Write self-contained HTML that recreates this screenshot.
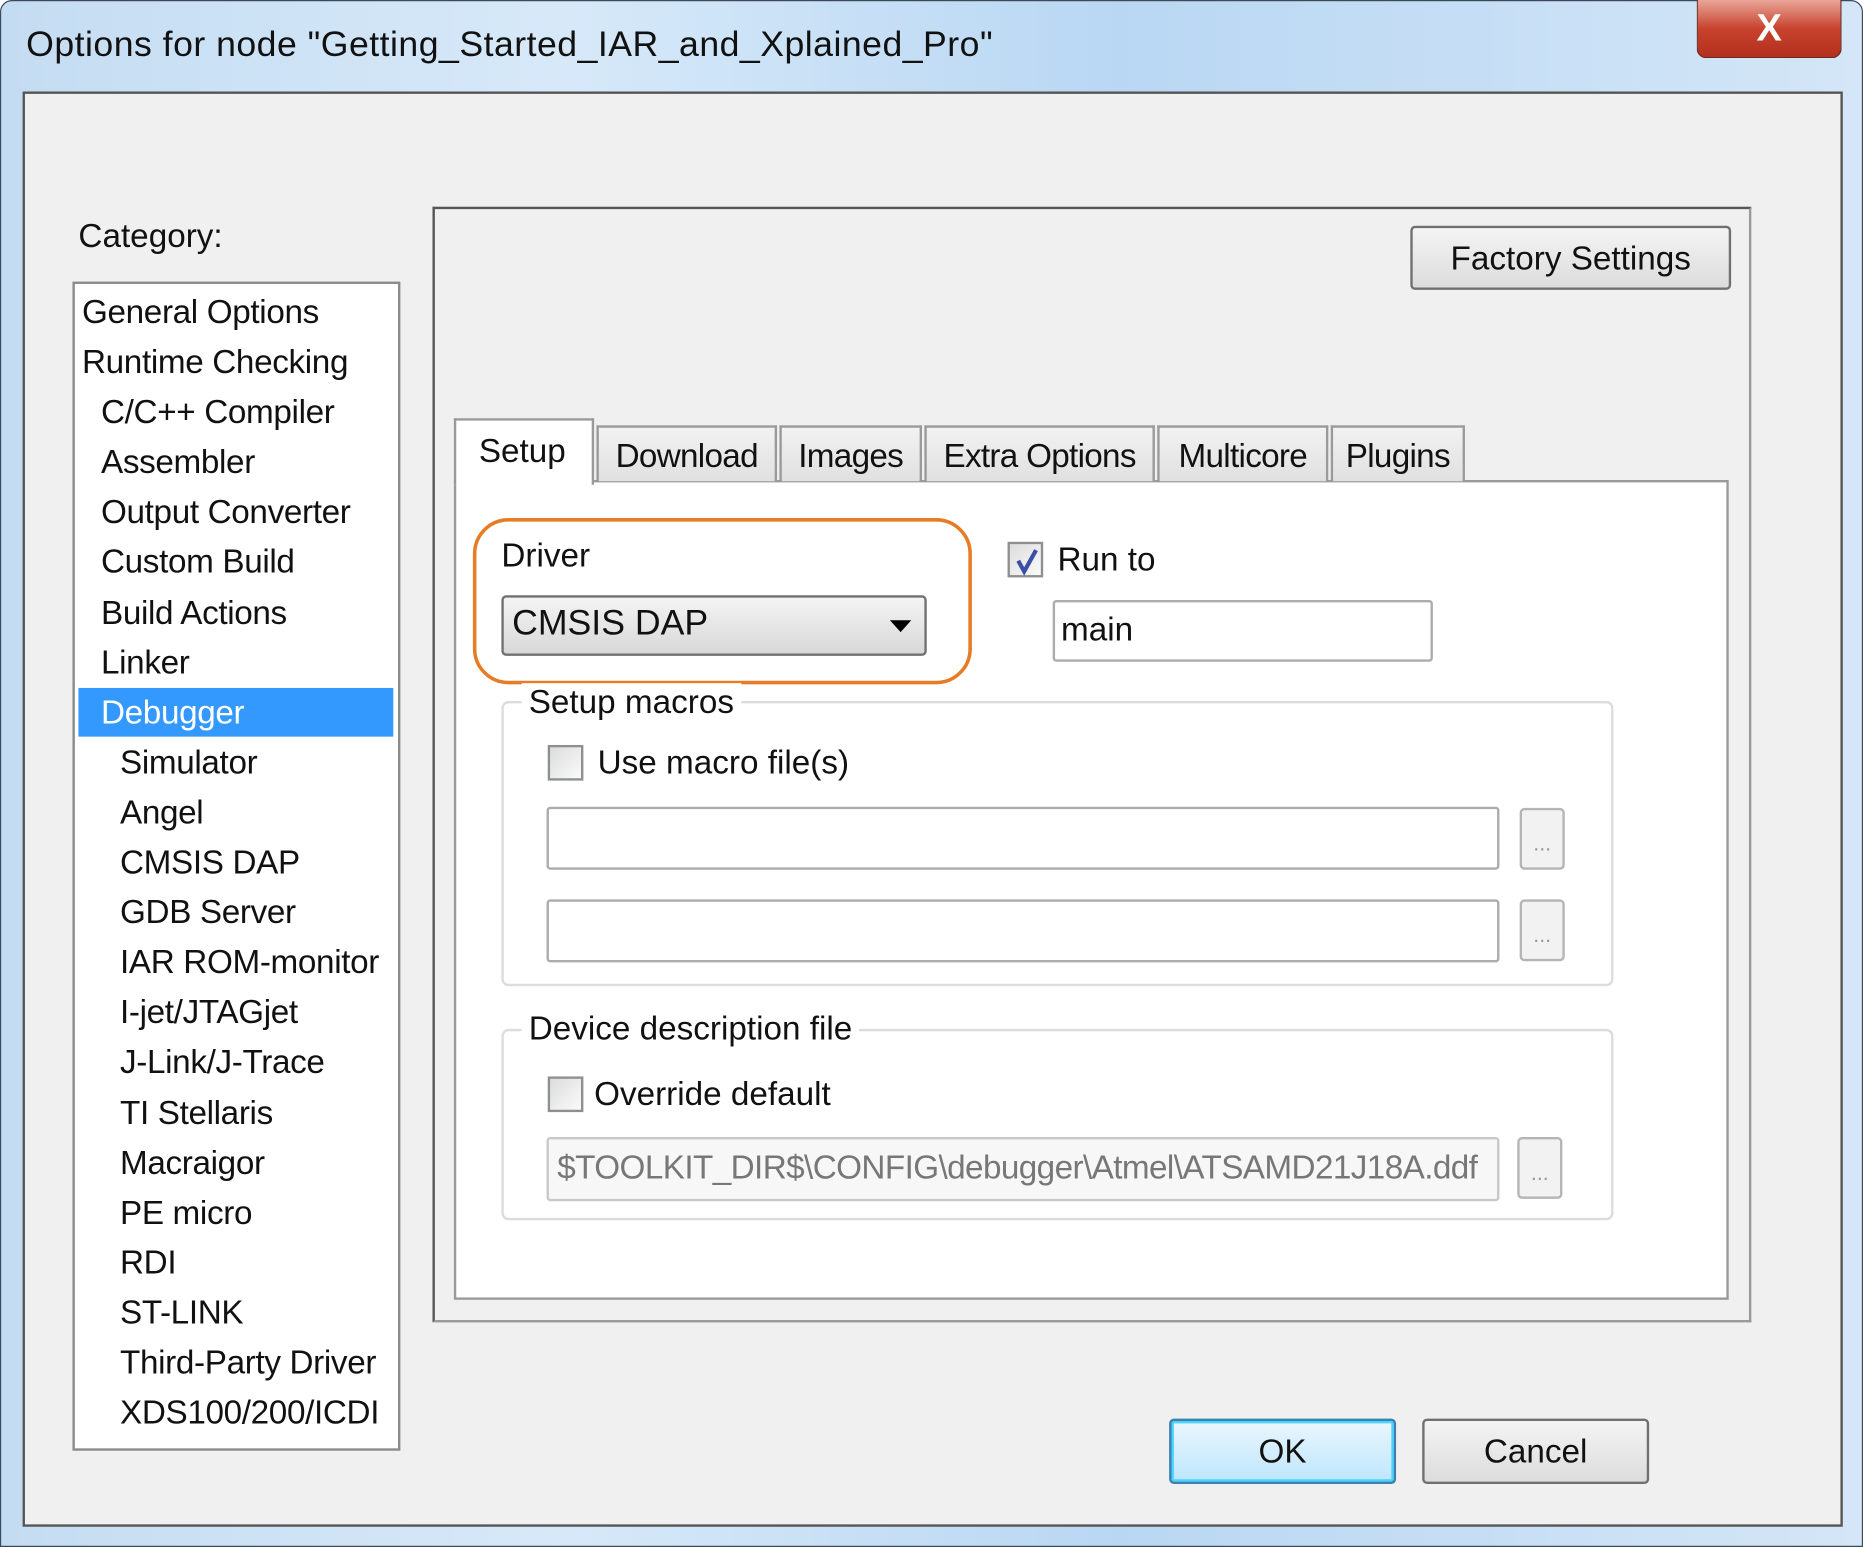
<!DOCTYPE html>
<html><head><meta charset="utf-8"><style>
html,body{margin:0;padding:0;width:1863px;height:1547px;overflow:hidden;background:#fff}
#s{position:absolute;left:0;top:0;width:1568px;height:1302px;transform:scale(1.18814);transform-origin:0 0;font-family:"Liberation Sans",sans-serif;color:#111;font-size:28px;letter-spacing:0}
.a{position:absolute}
.win{left:0;top:0;width:1566px;height:1300px;border:1px solid #3a4a5a;border-radius:10px 10px 0 0;background:linear-gradient(90deg,#c4dcf2 0%,#d7e9f9 30%,#b9d7f3 60%,#d4e6f7 100%)}
.t{white-space:nowrap}
.box{background:#fff;border:2px solid #8a8a8a}
.btn{border:2px solid #707070;border-radius:4px;background:linear-gradient(#f4f4f4,#dcdcdc);text-align:center;box-sizing:border-box}
.inp{background:#fff;border:2px solid #acacac;border-radius:3px;box-sizing:border-box}
.cb{width:30px;height:30px;border:2px solid #8e8f8f;background:linear-gradient(135deg,#dcdcdc,#fafafa);box-sizing:border-box}
.dots{width:38px;height:52px;border:2px solid #b5b5b5;border-radius:4px;background:#f2f2f2;box-sizing:border-box;color:#999;font-size:18px;text-align:center;line-height:56px}
.tab{top:358px;height:47px;border:2px solid #9a9a9a;border-bottom:none;background:linear-gradient(#f2f2f2,#e0e0e0);box-sizing:border-box;text-align:center;line-height:48px;letter-spacing:-0.6px}
.grp{border:2px solid #dcdcdc;border-radius:6px}
.lg{background:#fff;padding:0 6px}
.l div{height:42.1px}
.l .i1{padding-left:16px}
.l .i2{padding-left:32px}
</style></head><body><div id="s">
<div class="a win"></div>
<div class="a t" style="left:22px;top:21px;font-size:30px;letter-spacing:0.4px">Options for node "Getting_Started_IAR_and_Xplained_Pro"</div>
<div class="a" style="left:1428px;top:0;width:120px;height:48px;border:1px solid #6b2a20;border-top:none;border-radius:0 0 8px 8px;background:linear-gradient(#e9a597,#c8432e 50%,#b3301d);color:#fff;font-size:32px;font-weight:bold;text-align:center;line-height:46px">X</div>
<div class="a" style="left:19px;top:77px;width:1528px;height:1204px;background:#f0f0f0;border:2px solid #555"></div>
<div class="a t" style="left:66px;top:183px">Category:</div>
<div class="a box" style="left:61px;top:237px;width:272px;height:980px"></div>
<div class="a" style="left:66px;top:579px;width:265px;height:41px;background:#3399ff"></div>
<div class="a t l" style="left:69px;top:246px;line-height:34px;letter-spacing:-0.3px">
<div>General Options</div><div>Runtime Checking</div><div class="i1">C/C++ Compiler</div><div class="i1">Assembler</div><div class="i1">Output Converter</div><div class="i1">Custom Build</div><div class="i1">Build Actions</div><div class="i1">Linker</div><div class="i1" style="color:#fff">Debugger</div><div class="i2">Simulator</div><div class="i2">Angel</div><div class="i2">CMSIS DAP</div><div class="i2">GDB Server</div><div class="i2">IAR ROM-monitor</div><div class="i2">I-jet/JTAGjet</div><div class="i2">J-Link/J-Trace</div><div class="i2">TI Stellaris</div><div class="i2">Macraigor</div><div class="i2">PE micro</div><div class="i2">RDI</div><div class="i2">ST-LINK</div><div class="i2">Third-Party Driver</div><div class="i2">XDS100/200/ICDI</div></div>
<div class="a" style="left:364px;top:174px;width:1106px;height:935px;border:2px solid #555;border-right-color:#999;border-bottom-color:#999"></div>
<div class="a btn t" style="left:1187px;top:190px;width:270px;height:54px;line-height:52px">Factory Settings</div>
<div class="a box" style="left:382px;top:404px;width:1069px;height:686px;border-color:#9a9a9a"></div>
<div class="a tab" style="left:502px;width:152px">Download</div>
<div class="a tab" style="left:656px;width:120px">Images</div>
<div class="a tab" style="left:778px;width:194px">Extra Options</div>
<div class="a tab" style="left:974px;width:144px">Multicore</div>
<div class="a tab" style="left:1120px;width:113px">Plugins</div>
<div class="a" style="left:382px;top:352px;width:118px;height:56px;background:#fff;border:2px solid #9a9a9a;border-bottom:none;box-sizing:border-box;line-height:52px;padding-left:19px">Setup</div>
<div class="a" style="left:398px;top:436px;width:414px;height:134px;border:3px solid #e77c26;border-radius:30px"></div>
<div class="a t" style="left:422px;top:452px">Driver</div>
<div class="a" style="left:422px;top:501px;width:358px;height:51px;border:2px solid #707070;border-radius:4px;box-sizing:border-box;background:linear-gradient(#f4f4f4,#d8d8d8)"></div>
<div class="a t" style="left:431px;top:508px;font-size:30px">CMSIS DAP</div>
<div class="a" style="left:749px;top:522px;width:0;height:0;border-left:9px solid transparent;border-right:9px solid transparent;border-top:10px solid #000"></div>
<div class="a cb" style="left:848px;top:456px"></div>
<svg class="a" style="left:848px;top:456px" width="32" height="32"><path d="M9 16 L14 25 L24 7" stroke="#3b4fa8" stroke-width="3.5" fill="none"/></svg>
<div class="a t" style="left:890px;top:455px">Run to</div>
<div class="a inp" style="left:886px;top:505px;width:320px;height:52px"></div>
<div class="a t" style="left:893px;top:514px">main</div>
<div class="a grp" style="left:422px;top:590px;width:932px;height:236px"></div>
<div class="a t lg" style="left:439px;top:575px">Setup macros</div>
<div class="a cb" style="left:461px;top:627px"></div>
<div class="a t" style="left:503px;top:626px">Use macro file(s)</div>
<div class="a inp" style="left:460px;top:679px;width:802px;height:53px"></div>
<div class="a dots" style="left:1279px;top:680px">...</div>
<div class="a inp" style="left:460px;top:757px;width:802px;height:53px"></div>
<div class="a dots" style="left:1279px;top:757px">...</div>
<div class="a grp" style="left:422px;top:866px;width:932px;height:157px"></div>
<div class="a t lg" style="left:439px;top:850px">Device description file</div>
<div class="a cb" style="left:461px;top:906px"></div>
<div class="a t" style="left:500px;top:905px">Override default</div>
<div class="a inp" style="left:460px;top:957px;width:802px;height:54px;background:#f7f7f7;border-color:#c8c8c8;overflow:hidden"><div class="t" style="padding:8px 0 0 7px;color:#777;letter-spacing:-0.5px">$TOOLKIT_DIR$\CONFIG\debugger\Atmel\ATSAMD21J18A.ddf</div></div>
<div class="a dots" style="left:1277px;top:957px">...</div>
<div class="a btn" style="left:984px;top:1194px;width:191px;height:55px;line-height:51px;border-color:#3c7fb1;background:linear-gradient(#eaf6fd,#bee6fd);box-shadow:inset 0 0 0 2px #48d4fb">OK</div>
<div class="a btn" style="left:1197px;top:1194px;width:191px;height:55px;line-height:51px">Cancel</div>
</div></body></html>
